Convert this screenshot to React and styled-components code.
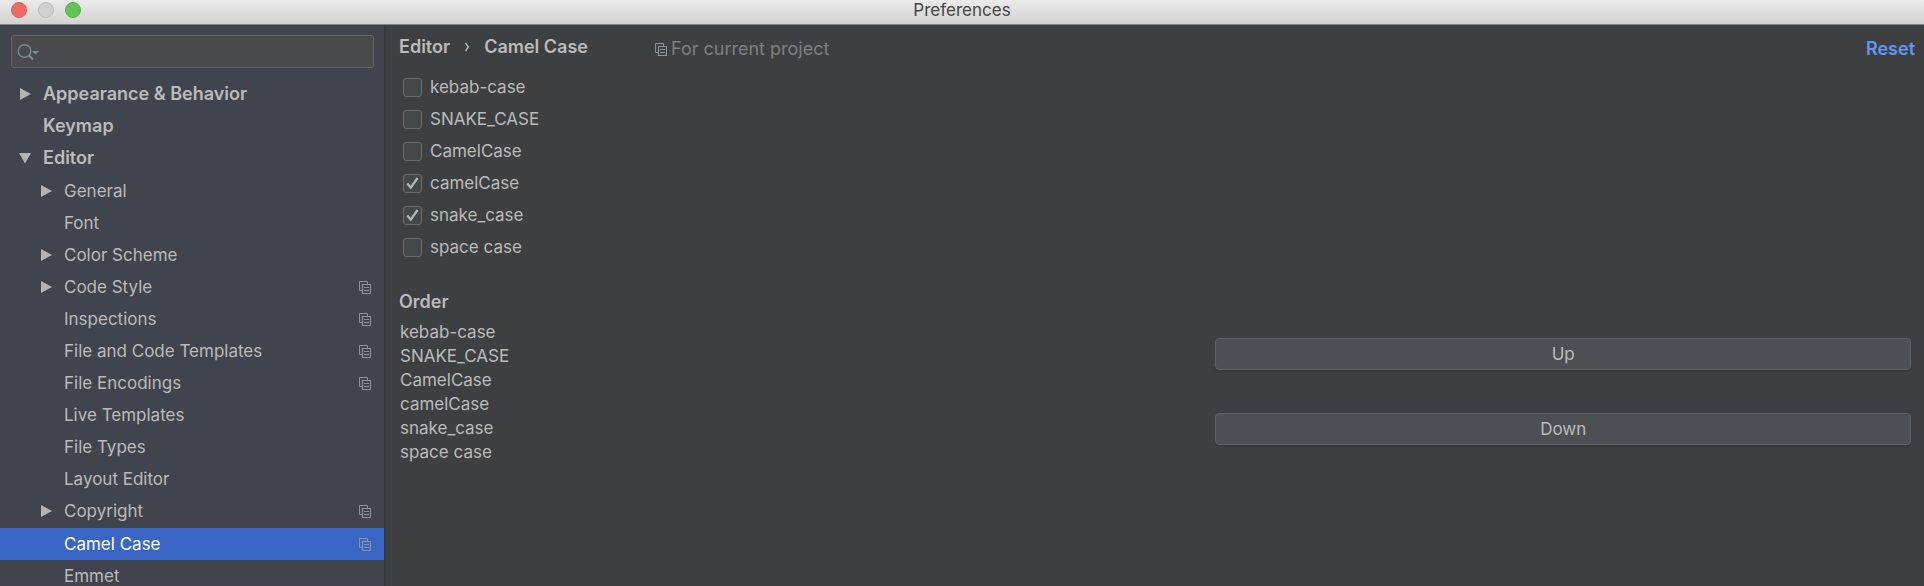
import React, { useState } from "react";
import styled, { createGlobalStyle } from "styled-components";

const color = {
  panel: "#3d3f41",
  sidebar: "#40444c",
  divider: "#373938",
  text: "#bbbbbb",
  muted: "#808080",
  icon: "#8a949c",
  selected: "#3966c4",
  link: "#6098f2",
};

const GlobalStyle = createGlobalStyle`
  * { box-sizing: border-box; }
  body {
    margin: 0;
    background: ${color.panel};
    color: ${color.text};
    font: 17px/24px Inter, "Liberation Sans", sans-serif;
  }
  button, input { font: inherit; color: inherit; }
`;

const Window = styled.div`
  display: flex;
  flex-direction: column;
  height: 100vh;
  overflow: hidden;
`;

const TitleBar = styled.header`
  display: grid;
  grid-template-columns: 1fr auto 1fr;
  align-items: start;
  flex: none;
  height: 25px;
  padding: 0 11px;
  background: linear-gradient(#ebebeb, #d2d2d2);
  border-bottom: 1px solid #7f8584;
`;

const Lights = styled.div`
  display: flex;
  gap: 11px;
  padding-top: 2px;
`;

const Light = styled.button`
  width: 16px;
  height: 16px;
  padding: 0;
  border: 1px solid ${(p) => p.$edge};
  border-radius: 50%;
  background: ${(p) => p.$fill};
`;

const Title = styled.h1`
  margin: 0;
  font-size: 17px;
  font-weight: 400;
  line-height: 21px;
  color: #464646;
`;

const Body = styled.div`
  display: flex;
  flex: 1;
  min-height: 0;
`;

const Sidebar = styled.nav`
  flex: none;
  width: 386px;
  max-width: 40%;
  overflow: hidden;
  background: ${color.sidebar};
  border-right: 2px solid ${color.divider};
`;

const Search = styled.label`
  display: flex;
  align-items: center;
  gap: 6px;
  height: 33px;
  margin: 10px 10px 10px 11px;
  padding-left: 5px;
  background: #484a4b;
  border: 1px solid #646464;
  border-radius: 3px;

  input {
    flex: 1;
    min-width: 0;
    padding: 0;
    border: 0;
    outline: 0;
    background: transparent;
  }
`;

const Tree = styled.ul`
  margin: 0;
  padding: 0;
  list-style: none;

  & & { padding-top: 1px; }
`;

const Row = styled.button`
  display: flex;
  align-items: center;
  width: 100%;
  height: 32px;
  margin-top: ${(p) => (p.$selected ? "1px" : "0")};
  padding: 0 13px 0 ${(p) => (p.$level ? "40px" : "19px")};
  border: 0;
  background: ${(p) => (p.$selected ? color.selected : "transparent")};
  color: ${(p) => (p.$selected ? "#ffffff" : color.text)};
  font-size: ${(p) => (p.$level ? "17px" : "18px")};
  font-weight: ${(p) => (p.$level ? 400 : 600)};
  text-align: left;
`;

const ArrowSlot = styled.span`
  display: flex;
  width: 24px;
`;

const RowLabel = styled.span`
  flex: 1;
`;

const Main = styled.main`
  flex: 1;
  min-width: 0;
  padding: 9px 13px 0;
`;

const PageHeader = styled.div`
  display: flex;
  align-items: center;
  height: 30px;
  font-size: 18px;
`;

const Breadcrumb = styled.div`
  display: flex;
  align-items: center;
  gap: 14px;
  padding-bottom: 4px;
  font-weight: 600;
`;

const Scope = styled.div`
  display: flex;
  align-items: center;
  gap: 4px;
  margin-left: 67px;
  color: ${color.muted};
`;

const Reset = styled.a`
  margin-left: auto;
  margin-right: -4px;
  color: ${color.link};
  font-weight: 600;
  text-decoration: none;
`;

const Options = styled.div`
  padding: 7px 0 0 4px;
`;

const Option = styled.label`
  display: flex;
  align-items: center;
  gap: 8px;
  height: 32px;
`;

const Box = styled.span`
  display: grid;
  width: 19px;
  height: 19px;

  > * { grid-area: 1 / 1; }
  svg { pointer-events: none; }
`;

const Check = styled.input`
  appearance: none;
  width: 19px;
  height: 19px;
  margin: 0;
  background: #43494a;
  border: 1px solid #6b6b6b;
  border-radius: 3px;
`;

const SectionTitle = styled.h2`
  margin: 27px 0 6px;
  font-size: 18px;
  font-weight: 600;
  line-height: 24px;
`;

const OrderGrid = styled.section`
  display: grid;
  grid-template-columns: 27fr 23fr;
`;

const OrderList = styled.ol`
  margin: 0;
  padding: 0 0 0 1px;
  list-style: none;
`;

const OrderButtons = styled.div`
  display: flex;
  flex-direction: column;
  gap: 43px;
  padding-top: 18px;
`;

const PushButton = styled.button`
  height: 32px;
  padding: 0;
  background: #4d5052;
  border: 1px solid #5e6162;
  border-radius: 4px;
  box-shadow: 0 2px 0 #38393b;
`;

const Arrow = ({ open }) => (
  <svg width="12" height="12" viewBox="0 0 12 12" fill="#b4b4b4" aria-hidden="true">
    <path d={open ? "M0 1h12L6 11.5z" : "M1 0v12l11-6z"} />
  </svg>
);

const ScopeIcon = () => (
  <svg width="12" height="13" viewBox="0 0 12 13" fill="none" stroke={color.icon} aria-hidden="true">
    <path d="M3 9.500H.5v-9h8V3" />
    <path d="M3.500 3.500h8v9h-8z" strokeWidth="1.200" />
    <path d="M5 6.500h5M5 9.500h5" />
  </svg>
);

const SearchIcon = () => (
  <svg width="22" height="18" viewBox="0 0 22 18" fill="none" stroke="#7d8b90" aria-hidden="true">
    <circle cx="7.5" cy="8" r="6.3" strokeWidth="1.4" />
    <path d="M12 12.5l4 4" strokeWidth="2.4" />
    <path d="M15 8h7l-3.500 3.500z" fill="#7d8b90" stroke="none" />
  </svg>
);

const CheckMark = () => (
  <svg width="19" height="19" viewBox="0 0 19 19" fill="none" stroke="#b8b8b8" strokeWidth="2.2" aria-hidden="true">
    <path d="M4.300 9.500l3.500 4.200L14.500 4" />
  </svg>
);

const tree = [
  { label: "Appearance & Behavior", arrow: true },
  { label: "Keymap" },
  {
    label: "Editor",
    arrow: true,
    items: [
      { label: "General", arrow: true },
      { label: "Font" },
      { label: "Color Scheme", arrow: true },
      { label: "Code Style", arrow: true, scoped: true },
      { label: "Inspections", scoped: true },
      { label: "File and Code Templates", scoped: true },
      { label: "File Encodings", scoped: true },
      { label: "Live Templates" },
      { label: "File Types" },
      { label: "Layout Editor" },
      { label: "Copyright", arrow: true, scoped: true },
      { label: "Camel Case", scoped: true, selected: true },
      { label: "Emmet" },
    ],
  },
];

const cases = ["kebab-case", "SNAKE_CASE", "CamelCase", "camelCase", "snake_case", "space case"];

const TreeLevel = ({ nodes, level = 0 }) => (
  <Tree>
    {nodes.map((n) => (
      <li key={n.label}>
        <Row type="button" $level={level} $selected={n.selected} aria-expanded={n.arrow ? !!n.items : undefined}>
          <ArrowSlot>{n.arrow && <Arrow open={!!n.items} />}</ArrowSlot>
          <RowLabel>{n.label}</RowLabel>
          {n.scoped && <ScopeIcon />}
        </Row>
        {n.items && <TreeLevel nodes={n.items} level={level + 1} />}
      </li>
    ))}
  </Tree>
);

export default function App() {
  const [enabled, setEnabled] = useState(["camelCase", "snake_case"]);
  const toggle = (name) =>
    setEnabled((list) => (list.includes(name) ? list.filter((n) => n !== name) : [...list, name]));

  return (
    <Window>
      <GlobalStyle />
      <TitleBar>
        <Lights>
          <Light aria-label="Close" $fill="#ed6b5f" $edge="#dc5f54" />
          <Light aria-label="Minimize" $fill="#d0d0d0" $edge="#bcbcbc" />
          <Light aria-label="Zoom" $fill="#61c554" $edge="#55b048" />
        </Lights>
        <Title>Preferences</Title>
      </TitleBar>
      <Body>
        <Sidebar>
          <Search>
            <SearchIcon />
            <input type="text" aria-label="Search settings" />
          </Search>
          <TreeLevel nodes={tree} />
        </Sidebar>
        <Main>
          <PageHeader>
            <Breadcrumb>
              <span>Editor</span>
              <svg width="6" height="10" viewBox="0 0 6 10" fill="none" stroke={color.text} strokeWidth="1.400" aria-hidden="true">
                <path d="M1.500 0.800L4.300 5L1.500 9.200" />
              </svg>
              <span>Camel Case</span>
            </Breadcrumb>
            <Scope>
              <ScopeIcon />
              <span>For current project</span>
            </Scope>
            <Reset href="#reset">Reset</Reset>
          </PageHeader>
          <Options>
            {cases.map((name) => (
              <Option key={name}>
                <Box>
                  <Check type="checkbox" checked={enabled.includes(name)} onChange={() => toggle(name)} />
                  {enabled.includes(name) && <CheckMark />}
                </Box>
                {name}
              </Option>
            ))}
          </Options>
          <SectionTitle>Order</SectionTitle>
          <OrderGrid>
            <OrderList>
              {cases.map((name) => (
                <li key={name}>{name}</li>
              ))}
            </OrderList>
            <OrderButtons>
              <PushButton type="button">Up</PushButton>
              <PushButton type="button">Down</PushButton>
            </OrderButtons>
          </OrderGrid>
        </Main>
      </Body>
    </Window>
  );
}
